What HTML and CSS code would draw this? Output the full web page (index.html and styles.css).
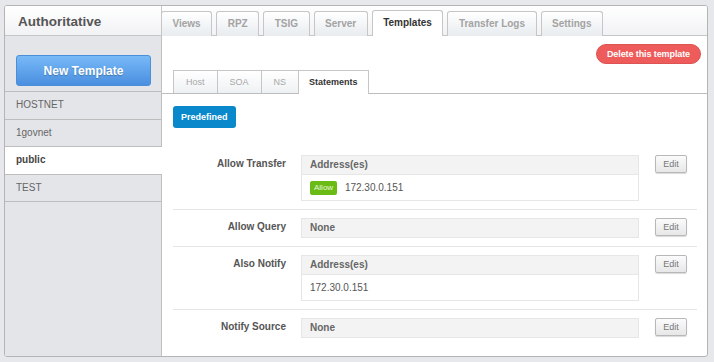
FILE: index.html
```html
<!DOCTYPE html>
<html lang="en">
<head>
    <meta charset="UTF-8">
    <title>Authoritative - Templates</title>
    <link rel="stylesheet" href="styles.css">
</head>
<body>
    <div class="panel">
        <div class="title">Authoritative</div>
        <ul class="tabs">
            <li>Views</li>
            <li>RPZ</li>
            <li>TSIG</li>
            <li>Server</li>
            <li class="active">Templates</li>
            <li>Transfer Logs</li>
            <li>Settings</li>
        </ul>

        <div class="sidebar">
            <button class="new-btn">New Template</button>
            <ul class="templates">
                <li>HOSTNET</li>
                <li>1govnet</li>
                <li class="selected">public</li>
                <li>TEST</li>
            </ul>
        </div>

        <div class="content">
            <div class="toolbar">
                <button class="delete-btn">Delete this template</button>
            </div>
            <ul class="subtabs">
                <li>Host</li>
                <li>SOA</li>
                <li>NS</li>
                <li class="active">Statements</li>
            </ul>

            <div class="statements">
                <button class="predef-btn">Predefined</button>

                <div class="row">
                    <div class="label">Allow Transfer</div>
                    <div class="box">
                        <div class="box-head">Address(es)</div>
                        <div class="box-body"><span class="badge">Allow</span> 172.30.0.151</div>
                    </div>
                    <button class="edit-btn">Edit</button>
                </div>
                <div class="row">
                    <div class="label">Allow Query</div>
                    <div class="box single">None</div>
                    <button class="edit-btn">Edit</button>
                </div>
                <div class="row">
                    <div class="label">Also Notify</div>
                    <div class="box">
                        <div class="box-head">Address(es)</div>
                        <div class="box-body">172.30.0.151</div>
                    </div>
                    <button class="edit-btn">Edit</button>
                </div>
                <div class="row last">
                    <div class="label">Notify Source</div>
                    <div class="box single">None</div>
                    <button class="edit-btn">Edit</button>
                </div>
            </div>
        </div>
    </div>
</body>
</html>
```

FILE: styles.css
```css
body {
    margin: 0;
    padding: 5px 6px 6px 4px;
    background-color: #e6e8eb;
    font-family: "Liberation Sans", Arial, sans-serif;
    font-size: 10px;
    color: #555;
}
ul {
    list-style: none;
    margin: 0;
    padding: 0;
}
button {
    font-family: "Liberation Sans", Arial, sans-serif;
    cursor: pointer;
}
.panel {
    display: grid;
    grid-template-columns: 157px 1fr;
    grid-template-rows: 30px 320px;
    border: 1px solid #b4b4b4;
    border-radius: 3px;
    background-color: white;
    overflow: hidden;
}
.title {
    font-size: 13.5px;
    font-weight: bold;
    color: #555;
    padding: 8px 0 0 13px;
    background: linear-gradient(#ffffff, #f1f2f4);
    border-bottom: 1px solid #c6c6c6;
    border-right: 1px solid #c6c6c6;
}
.tabs {
    display: flex;
    gap: 4px;
    align-items: flex-end;
    background: linear-gradient(#ffffff, #f1f2f4);
    border-bottom: 1px solid #c6c6c6;
}
.tabs li {
    height: 24px;
    line-height: 24px;
    padding: 0 10.5px;
    border: 1px solid #c6c6c6;
    border-bottom: none;
    border-radius: 3px 3px 0 0;
    background: linear-gradient(#ffffff, #e8ecef);
    font-weight: bold;
    color: #a3a3a3;
    margin-bottom: -1px;
}
.tabs li:first-child {
    margin-left: -1px;
}
.tabs li.active {
    background: white;
    color: #333;
    height: 25px;
}
.sidebar {
    background-color: #e4e5e9;
    border-right: 1px solid #c0c0c0;
}
.new-btn {
    display: block;
    width: 135px;
    height: 31px;
    margin: 19px 0 5px 11px;
    border: 1px solid #4b8fd8;
    border-radius: 3px;
    background: linear-gradient(#78b9f7, #4a8fe0);
    color: white;
    font-size: 12px;
    font-weight: bold;
    text-shadow: 0 1px 1px rgba(0, 0, 0, 0.25);
}
.templates li {
    height: 26.5px;
    line-height: 26px;
    padding-left: 11px;
    border-top: 1px solid #bdbdbd;
    color: #666;
}
.templates li:last-child {
    border-bottom: 1px solid #bdbdbd;
}
.templates li.selected {
    background-color: white;
    font-weight: bold;
    color: #444;
    margin-right: -1px;
}
.toolbar {
    display: flex;
    justify-content: flex-end;
    padding: 8px 6px 6px 0;
}
.delete-btn {
    height: 20px;
    padding: 0 10px;
    border: 1px solid #dd5252;
    border-radius: 10px;
    background-color: #ee5b5b;
    color: white;
    font-size: 9px;
    font-weight: bold;
    letter-spacing: -0.1px;
}
.subtabs {
    display: flex;
    padding-left: 11px;
    border-bottom: 1px solid #bdbdbd;
    font-size: 9px;
}
.subtabs li {
    height: 22px;
    line-height: 22px;
    padding: 0 12px;
    border: 1px solid #c6c6c6;
    border-bottom: none;
    border-left: none;
    background: linear-gradient(#ffffff, #eef1f3);
    color: #a8a8a8;
    margin-bottom: -1px;
}
.subtabs li:first-child {
    border-left: 1px solid #c6c6c6;
}
.subtabs li.active {
    background: white;
    color: #333;
    font-weight: bold;
    height: 23px;
    padding: 0 10px;
}
.statements {
    padding: 12px 10px 0 11px;
}
.predef-btn {
    height: 22px;
    padding: 0 8px;
    border: none;
    border-radius: 3px;
    background-color: #0a88cc;
    color: white;
    font-size: 9px;
    font-weight: bold;
    margin-bottom: 19px;
}
.row {
    display: flex;
    align-items: flex-start;
    padding: 8px 0;
    border-bottom: 1px solid #e6e6e6;
}
.row.last {
    border-bottom: none;
}
.label {
    width: 113px;
    text-align: right;
    font-weight: bold;
    color: #555;
    padding-top: 3px;
    margin-right: 15px;
}
.box {
    width: 336px;
    border: 1px solid #e6e6e6;
}
.box-head {
    height: 18px;
    line-height: 18px;
    padding-left: 8px;
    background-color: #f3f3f3;
    border-bottom: 1px solid #e6e6e6;
    font-weight: bold;
    color: #666;
}
.box-body {
    height: 25px;
    line-height: 25px;
    padding-left: 8px;
    color: #555;
}
.box.single {
    height: 18px;
    line-height: 18px;
    padding-left: 8px;
    width: 328px;
    background-color: #f3f3f3;
    font-weight: bold;
    color: #666;
}
.badge {
    display: inline-block;
    height: 14px;
    line-height: 14px;
    padding: 0 4px;
    margin-right: 5px;
    border-radius: 2px;
    background-color: #6abb16;
    color: #e8f7d8;
    font-size: 8px;
    vertical-align: 1px;
}
.edit-btn {
    width: 32px;
    height: 18px;
    margin-left: 16px;
    padding: 0;
    border: 1px solid #b8b8b8;
    border-radius: 2px;
    background: linear-gradient(#fbfbfb, #e7e7e7);
    box-shadow: 0 1px 1px rgba(0, 0, 0, 0.15);
    color: #777;
    font-size: 9px;
}
```
